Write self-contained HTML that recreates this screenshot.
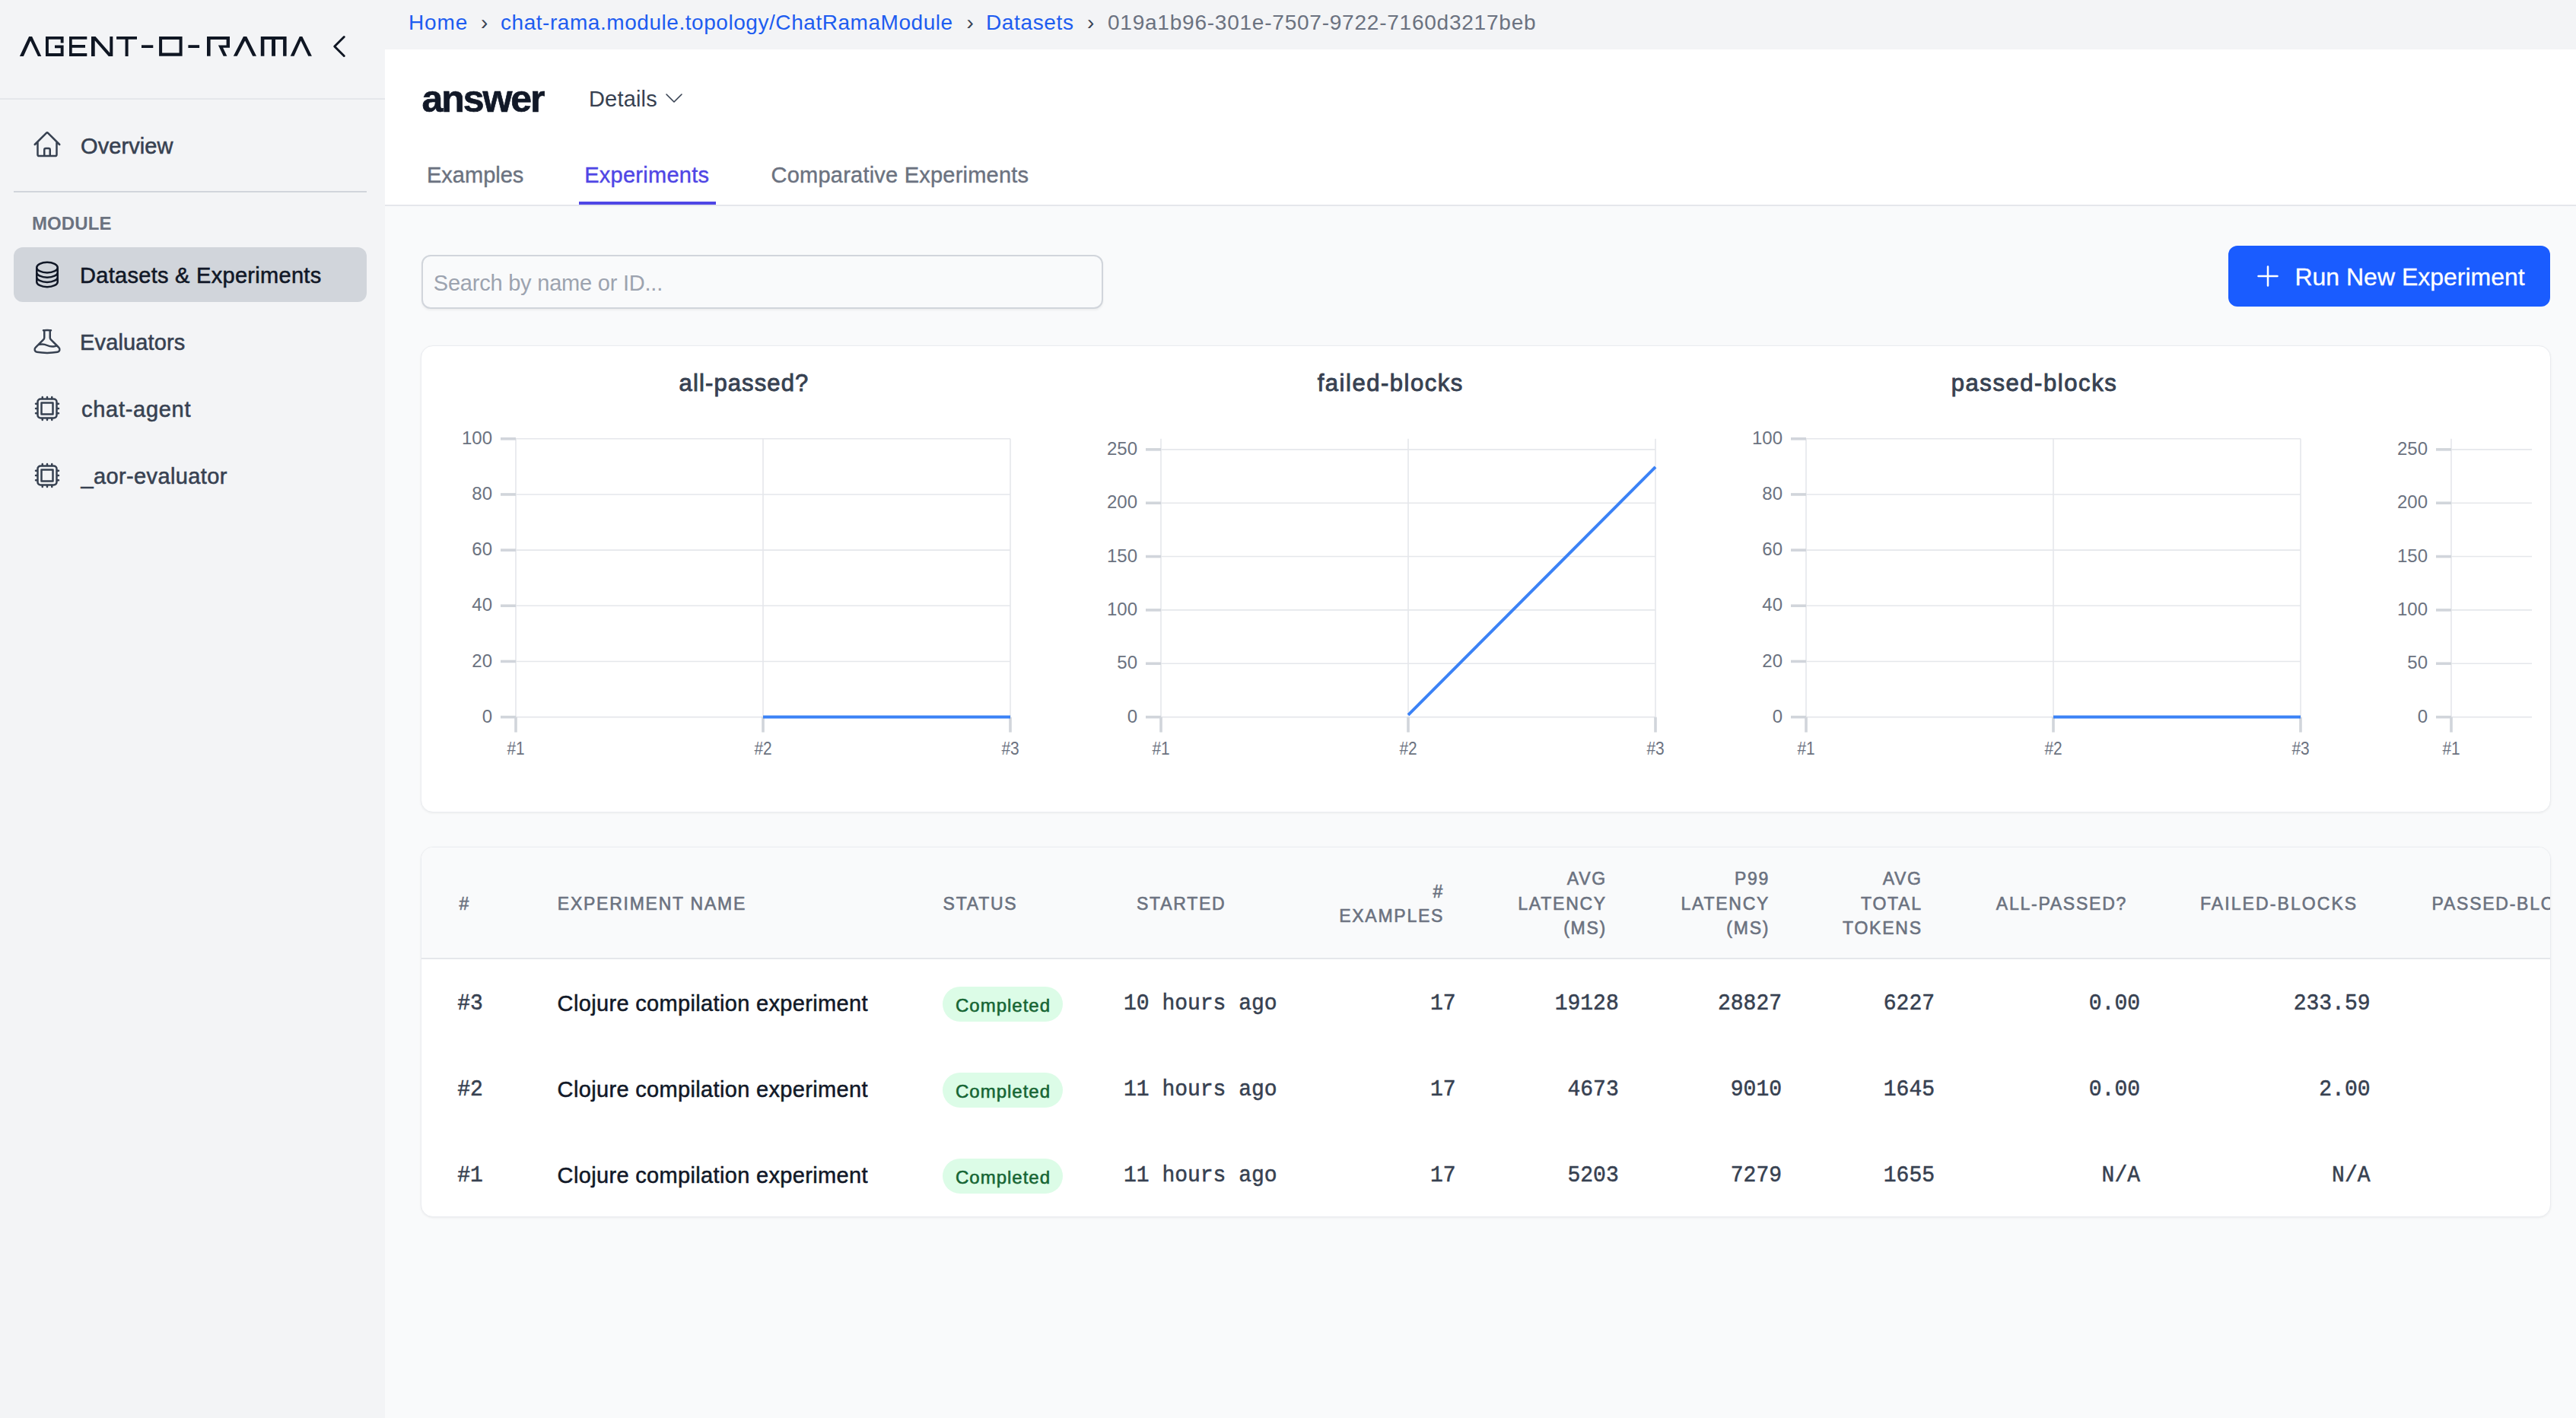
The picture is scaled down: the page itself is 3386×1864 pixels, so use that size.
<!DOCTYPE html>
<html><head><meta charset="utf-8"><title>Agent-O-Rama</title>
<style>
html,body{margin:0;padding:0;}
body{width:3386px;height:1864px;overflow:hidden;position:relative;background:#f9fafb;font-family:'Liberation Sans', sans-serif;}
svg{position:absolute;overflow:visible;}
@media (max-width:1800px){html{zoom:0.5;}}
</style></head><body>
<div style="position:absolute;left:0px;top:0px;width:506px;height:1864px;background:#f3f4f6;"></div>
<div style="position:absolute;left:506px;top:0px;width:2880px;height:65px;background:#f3f4f6;"></div>
<div style="position:absolute;left:506px;top:65px;width:2880px;height:204px;background:#ffffff;"></div>
<div style="position:absolute;left:506px;top:269px;width:2880px;height:2px;background:#e5e7eb;"></div>
<div style="position:absolute;left:0px;top:129px;width:506px;height:2px;background:#e5e7eb;"></div>
<svg style="left:0;top:0" width="506" height="130" viewBox="0 0 506 130">
<g fill="#0f1623">
<polygon points="25.9,74 38.1,48 42.1,48 54.3,74 49.9,74 40.1,53.5 30.9,74"/>
<path d="M60 48H83.6V56.6H79.7V51.8H63.9V70.1H79.7V63.2H72V59.6H83.6V74H60Z"/>
<path d="M91 48H114.3V51.8H94.7V59.1H112V62.8H94.7V70.1H114.3V74H91Z"/>
<path d="M120 48H125.5L144.3 69.5V48H148.3V74H142.8L124.7 53.2V74H120Z"/>
<path d="M153.1 48H180V51.8H168.6V74H164.6V51.8H153.1Z"/>
<rect x="186" y="59.3" width="15.3" height="3.7"/>
<path fill-rule="evenodd" d="M209.1 48H239.6V73.8H209.1ZM213.1 52V69.5H235.6V52Z"/>
<rect x="247.4" y="59.2" width="14.7" height="3.8"/>
<path d="M272 48H302V62.65H293.1L298.4 73.8H293.7L286.9 59.4H297.6V51.9H276.6V73.8H272Z"/>
<polygon points="306.8,73.8 320,48 324.2,48 337.05,73.8 332.2,73.8 322.1,53.5 311.6,73.8"/>
<path d="M342.8 48H376.6V73.8H372.1V52.1H362V73.8H357.1V52.1H347.4V73.8H342.8Z"/>
<polygon points="381.7,73.8 393.8,48 397.3,48 409.9,73.8 405.3,73.8 395.5,53.5 386.5,73.8"/>
</g>
<g transform="translate(426,41) scale(1.6667)" fill="none" stroke="#0f1623" stroke-width="1.8" stroke-linecap="round" stroke-linejoin="round"><path d="M15.75 19.5 8.25 12l7.5-7.5"/></g>
</svg>
<svg style="left:42px;top:170px" width="40" height="40" viewBox="0 0 24 24" fill="none" stroke="#374151" stroke-width="1.5" stroke-linecap="round" stroke-linejoin="round"><path d="m2.25 12 8.954-8.955c.44-.439 1.152-.439 1.591 0L21.75 12M4.5 9.75v10.125c0 .621.504 1.125 1.125 1.125H9.75v-4.875c0-.621.504-1.125 1.125-1.125h2.25c.621 0 1.125.504 1.125 1.125V21h4.125c.621 0 1.125-.504 1.125-1.125V9.75M8.25 21h8.25"/></svg>
<div style="position:absolute;top:177.75px;font-family:'Liberation Sans', sans-serif;font-size:29px;line-height:29px;color:#374151;white-space:nowrap;font-weight:400;letter-spacing:0.09px;left:106.00px;-webkit-text-stroke:0.55px #374151;">Overview</div>
<div style="position:absolute;left:18px;top:251px;width:464px;height:2px;background:#d1d5db;"></div>
<div style="position:absolute;top:281.60px;font-family:'Liberation Sans', sans-serif;font-size:24px;line-height:24px;color:#6b7280;white-space:nowrap;font-weight:700;letter-spacing:0.12px;left:41.90px;">MODULE</div>
<div style="position:absolute;left:18px;top:325px;width:464px;height:72px;background:#d1d5db;border-radius:12px;"></div>
<svg style="left:42px;top:341px" width="40" height="40" viewBox="0 0 24 24" fill="none" stroke="#111827" stroke-width="1.5" stroke-linecap="round" stroke-linejoin="round"><path d="M20.25 6.375c0 2.278-3.694 4.125-8.25 4.125S3.75 8.653 3.75 6.375m16.5 0c0-2.278-3.694-4.125-8.25-4.125S3.75 4.097 3.75 6.375m16.5 0v11.25c0 2.278-3.694 4.125-8.25 4.125s-8.25-1.847-8.25-4.125V6.375m16.5 0v3.75m-16.5-3.75v3.75m16.5 0v3.75C20.25 16.153 16.556 18 12 18s-8.25-1.847-8.25-4.125v-3.75m16.5 0c0 2.278-3.694 4.125-8.25 4.125s-8.25-1.847-8.25-4.125"/></svg>
<div style="position:absolute;top:347.85px;font-family:'Liberation Sans', sans-serif;font-size:29px;line-height:29px;color:#111827;white-space:nowrap;font-weight:400;letter-spacing:0.29px;left:105.00px;-webkit-text-stroke:0.55px #111827;">Datasets &amp; Experiments</div>
<svg style="left:42px;top:429px" width="40" height="40" viewBox="0 0 24 24" fill="none" stroke="#374151" stroke-width="1.5" stroke-linecap="round" stroke-linejoin="round"><path d="M9.75 3.104v5.714a2.25 2.25 0 0 1-.659 1.591L5 14.5M9.75 3.104c-.251.023-.501.05-.75.082m.75-.082a24.301 24.301 0 0 1 4.5 0m0 0v5.714c0 .597.237 1.17.659 1.591L19.8 15.3M14.25 3.104c.251.023.501.05.75.082M19.8 15.3l-1.57.393A9.065 9.065 0 0 1 12 15a9.065 9.065 0 0 0-6.23-.693L5 14.5m14.8.8 1.402 1.402c1.232 1.232.65 3.318-1.067 3.611A48.309 48.309 0 0 1 12 21c-2.773 0-5.491-.235-8.135-.687-1.718-.293-2.3-2.379-1.067-3.61L5 14.5"/></svg>
<div style="position:absolute;top:435.95px;font-family:'Liberation Sans', sans-serif;font-size:29px;line-height:29px;color:#374151;white-space:nowrap;font-weight:400;letter-spacing:0.15px;left:105.00px;-webkit-text-stroke:0.55px #374151;">Evaluators</div>
<svg style="left:42px;top:517px" width="40" height="40" viewBox="0 0 24 24" fill="none" stroke="#374151" stroke-width="1.5" stroke-linecap="round" stroke-linejoin="round"><path d="M8.25 3v1.5M4.5 8.25H3m18 0h-1.5M4.5 12H3m18 0h-1.5m-15 3.75H3m18 0h-1.5M8.25 19.5V21M12 3v1.5m0 15V21m3.75-18v1.5m0 15V21m-9-1.5h10.5a2.25 2.25 0 0 0 2.25-2.25V6.75a2.25 2.25 0 0 0-2.25-2.25H6.75A2.25 2.25 0 0 0 4.5 6.75v10.5a2.25 2.25 0 0 0 2.25 2.25Zm.75-12h9v9h-9v-9Z"/></svg>
<div style="position:absolute;top:523.75px;font-family:'Liberation Sans', sans-serif;font-size:29px;line-height:29px;color:#374151;white-space:nowrap;font-weight:400;letter-spacing:0.72px;left:107.00px;-webkit-text-stroke:0.55px #374151;">chat-agent</div>
<svg style="left:42px;top:605px" width="40" height="40" viewBox="0 0 24 24" fill="none" stroke="#374151" stroke-width="1.5" stroke-linecap="round" stroke-linejoin="round"><path d="M8.25 3v1.5M4.5 8.25H3m18 0h-1.5M4.5 12H3m18 0h-1.5m-15 3.75H3m18 0h-1.5M8.25 19.5V21M12 3v1.5m0 15V21m3.75-18v1.5m0 15V21m-9-1.5h10.5a2.25 2.25 0 0 0 2.25-2.25V6.75a2.25 2.25 0 0 0-2.25-2.25H6.75A2.25 2.25 0 0 0 4.5 6.75v10.5a2.25 2.25 0 0 0 2.25 2.25Zm.75-12h9v9h-9v-9Z"/></svg>
<div style="position:absolute;top:611.75px;font-family:'Liberation Sans', sans-serif;font-size:29px;line-height:29px;color:#374151;white-space:nowrap;font-weight:400;letter-spacing:0.38px;left:106.50px;-webkit-text-stroke:0.55px #374151;">_aor-evaluator</div>
<div style="position:absolute;top:16.00px;font-family:'Liberation Sans', sans-serif;font-size:28px;line-height:28px;color:#1d5cf0;white-space:nowrap;font-weight:400;letter-spacing:0.87px;left:537.00px;">Home</div>
<div style="position:absolute;top:16.00px;font-family:'Liberation Sans', sans-serif;font-size:28px;line-height:28px;color:#374151;white-space:nowrap;font-weight:400;left:632.00px;">&#8250;</div>
<div style="position:absolute;top:16.00px;font-family:'Liberation Sans', sans-serif;font-size:28px;line-height:28px;color:#1d5cf0;white-space:nowrap;font-weight:400;letter-spacing:0.55px;left:658.00px;">chat-rama.module.topology/ChatRamaModule</div>
<div style="position:absolute;top:16.00px;font-family:'Liberation Sans', sans-serif;font-size:28px;line-height:28px;color:#374151;white-space:nowrap;font-weight:400;left:1270.60px;">&#8250;</div>
<div style="position:absolute;top:16.00px;font-family:'Liberation Sans', sans-serif;font-size:28px;line-height:28px;color:#1d5cf0;white-space:nowrap;font-weight:400;letter-spacing:0.64px;left:1296.00px;">Datasets</div>
<div style="position:absolute;top:16.00px;font-family:'Liberation Sans', sans-serif;font-size:28px;line-height:28px;color:#374151;white-space:nowrap;font-weight:400;left:1429.00px;">&#8250;</div>
<div style="position:absolute;top:16.00px;font-family:'Liberation Sans', sans-serif;font-size:28px;line-height:28px;color:#6b7280;white-space:nowrap;font-weight:400;letter-spacing:0.77px;left:1456.00px;">019a1b96-301e-7507-9722-7160d3217beb</div>
<div style="position:absolute;top:105.40px;font-family:'Liberation Sans', sans-serif;font-size:50px;line-height:50px;color:#111827;white-space:nowrap;font-weight:700;letter-spacing:-2.1px;left:554.60px;-webkit-text-stroke:0.7px #111827;">answer</div>
<div style="position:absolute;top:115.75px;font-family:'Liberation Sans', sans-serif;font-size:29px;line-height:29px;color:#374151;white-space:nowrap;font-weight:400;letter-spacing:0.17px;left:774.00px;">Details</div>
<svg style="left:869.8px;top:113px" width="32" height="32" viewBox="0 0 24 24" fill="none" stroke="#374151" stroke-width="1.2" stroke-linecap="round" stroke-linejoin="round"><path d="m19.5 8.25-7.5 7.5-7.5-7.5"/></svg>
<div style="position:absolute;top:215.85px;font-family:'Liberation Sans', sans-serif;font-size:29px;line-height:29px;color:#6b7280;white-space:nowrap;font-weight:400;left:561.00px;-webkit-text-stroke:0.4px #6b7280;">Examples</div>
<div style="position:absolute;top:215.85px;font-family:'Liberation Sans', sans-serif;font-size:29px;line-height:29px;color:#4f46e5;white-space:nowrap;font-weight:400;letter-spacing:0.27px;left:768.20px;-webkit-text-stroke:0.4px #4f46e5;">Experiments</div>
<div style="position:absolute;top:215.85px;font-family:'Liberation Sans', sans-serif;font-size:29px;line-height:29px;color:#6b7280;white-space:nowrap;font-weight:400;letter-spacing:0.22px;left:1013.60px;-webkit-text-stroke:0.4px #6b7280;">Comparative Experiments</div>
<div style="position:absolute;left:761px;top:265px;width:180px;height:4px;background:#4f46e5;"></div>
<div style="position:absolute;left:554px;top:335px;width:892px;height:67px;border:2px solid #d1d5db;border-radius:12px;background:#f9fafb;box-shadow:0 2px 3px rgba(0,0,0,0.05);"></div>
<div style="position:absolute;top:357.85px;font-family:'Liberation Sans', sans-serif;font-size:29px;line-height:29px;color:#9ca3af;white-space:nowrap;font-weight:400;letter-spacing:-0.22px;left:569.80px;">Search by name or ID...</div>
<div style="position:absolute;left:2929px;top:323px;width:423px;height:80px;border-radius:12px;background:#1a5cff;"></div>
<svg style="left:2961px;top:343px" width="40" height="40" viewBox="0 0 24 24" fill="none" stroke="#ffffff" stroke-width="1.5" stroke-linecap="round" stroke-linejoin="round"><path d="M12 4.5v15m7.5-7.5h-15"/></svg>
<div style="position:absolute;top:348.10px;font-family:'Liberation Sans', sans-serif;font-size:32px;line-height:32px;color:#ffffff;white-space:nowrap;font-weight:400;left:3016.40px;-webkit-text-stroke:0.3px #ffffff;">Run New Experiment</div>
<div style="position:absolute;left:553px;top:453.5px;width:2798px;height:612px;border:1px solid #eaecf0;border-radius:16px;background:#ffffff;box-shadow:0 1px 3px rgba(0,0,0,0.06);"></div>
<div style="position:absolute;top:488.45px;font-family:'Liberation Sans', sans-serif;font-size:31px;line-height:31px;color:#374151;white-space:nowrap;font-weight:400;letter-spacing:1.11px;left:978.00px;transform:translateX(-50%);transform-origin:50% 26.35px;-webkit-text-stroke:0.9px #374151;">all-passed?</div>
<svg style="left:0;top:0" width="3386" height="1864"><line x1="678" y1="942.60" x2="1328" y2="942.60" stroke="#e5e7eb" stroke-width="1.6"/><line x1="678" y1="869.44" x2="1328" y2="869.44" stroke="#e5e7eb" stroke-width="1.6"/><line x1="678" y1="796.28" x2="1328" y2="796.28" stroke="#e5e7eb" stroke-width="1.6"/><line x1="678" y1="723.12" x2="1328" y2="723.12" stroke="#e5e7eb" stroke-width="1.6"/><line x1="678" y1="649.96" x2="1328" y2="649.96" stroke="#e5e7eb" stroke-width="1.6"/><line x1="678" y1="576.80" x2="1328" y2="576.80" stroke="#e5e7eb" stroke-width="1.6"/><line x1="678.00" y1="576.8" x2="678.00" y2="942.6" stroke="#e5e7eb" stroke-width="1.6"/><line x1="1003.00" y1="576.8" x2="1003.00" y2="942.6" stroke="#e5e7eb" stroke-width="1.6"/><line x1="1328.00" y1="576.8" x2="1328.00" y2="942.6" stroke="#e5e7eb" stroke-width="1.6"/><line x1="658" y1="942.60" x2="678" y2="942.60" stroke="#d1d5db" stroke-width="3.6"/><line x1="658" y1="869.44" x2="678" y2="869.44" stroke="#d1d5db" stroke-width="3.6"/><line x1="658" y1="796.28" x2="678" y2="796.28" stroke="#d1d5db" stroke-width="3.6"/><line x1="658" y1="723.12" x2="678" y2="723.12" stroke="#d1d5db" stroke-width="3.6"/><line x1="658" y1="649.96" x2="678" y2="649.96" stroke="#d1d5db" stroke-width="3.6"/><line x1="658" y1="576.80" x2="678" y2="576.80" stroke="#d1d5db" stroke-width="3.6"/><line x1="678.00" y1="942.6" x2="678.00" y2="962.6" stroke="#d1d5db" stroke-width="3.6"/><line x1="1003.00" y1="942.6" x2="1003.00" y2="962.6" stroke="#d1d5db" stroke-width="3.6"/><line x1="1328.00" y1="942.6" x2="1328.00" y2="962.6" stroke="#d1d5db" stroke-width="3.6"/><polyline points="1003.00,942.60 1328.00,942.60" fill="none" stroke="#3b82f6" stroke-width="4" stroke-linecap="butt" stroke-linejoin="round"/></svg>
<div style="position:absolute;top:929.70px;font-family:'Liberation Sans', sans-serif;font-size:24px;line-height:24px;color:#6b7280;white-space:nowrap;font-weight:400;right:2739.00px;">0</div>
<div style="position:absolute;top:856.54px;font-family:'Liberation Sans', sans-serif;font-size:24px;line-height:24px;color:#6b7280;white-space:nowrap;font-weight:400;right:2739.00px;">20</div>
<div style="position:absolute;top:783.38px;font-family:'Liberation Sans', sans-serif;font-size:24px;line-height:24px;color:#6b7280;white-space:nowrap;font-weight:400;right:2739.00px;">40</div>
<div style="position:absolute;top:710.22px;font-family:'Liberation Sans', sans-serif;font-size:24px;line-height:24px;color:#6b7280;white-space:nowrap;font-weight:400;right:2739.00px;">60</div>
<div style="position:absolute;top:637.06px;font-family:'Liberation Sans', sans-serif;font-size:24px;line-height:24px;color:#6b7280;white-space:nowrap;font-weight:400;right:2739.00px;">80</div>
<div style="position:absolute;top:563.90px;font-family:'Liberation Sans', sans-serif;font-size:24px;line-height:24px;color:#6b7280;white-space:nowrap;font-weight:400;right:2739.00px;">100</div>
<div style="position:absolute;top:971.60px;font-family:'Liberation Sans', sans-serif;font-size:24px;line-height:24px;color:#6b7280;white-space:nowrap;font-weight:400;left:678.00px;transform:translateX(-50%) scale(0.87,1.0);transform-origin:50% 20.40px;">#1</div>
<div style="position:absolute;top:971.60px;font-family:'Liberation Sans', sans-serif;font-size:24px;line-height:24px;color:#6b7280;white-space:nowrap;font-weight:400;left:1003.00px;transform:translateX(-50%) scale(0.87,1.0);transform-origin:50% 20.40px;">#2</div>
<div style="position:absolute;top:971.60px;font-family:'Liberation Sans', sans-serif;font-size:24px;line-height:24px;color:#6b7280;white-space:nowrap;font-weight:400;left:1328.00px;transform:translateX(-50%) scale(0.87,1.0);transform-origin:50% 20.40px;">#3</div>
<div style="position:absolute;top:488.45px;font-family:'Liberation Sans', sans-serif;font-size:31px;line-height:31px;color:#374151;white-space:nowrap;font-weight:400;letter-spacing:1.53px;left:1827.80px;transform:translateX(-50%);transform-origin:50% 26.35px;-webkit-text-stroke:0.9px #374151;">failed-blocks</div>
<svg style="left:0;top:0" width="3386" height="1864"><line x1="1526" y1="942.60" x2="2176" y2="942.60" stroke="#e5e7eb" stroke-width="1.6"/><line x1="1526" y1="872.25" x2="2176" y2="872.25" stroke="#e5e7eb" stroke-width="1.6"/><line x1="1526" y1="801.91" x2="2176" y2="801.91" stroke="#e5e7eb" stroke-width="1.6"/><line x1="1526" y1="731.56" x2="2176" y2="731.56" stroke="#e5e7eb" stroke-width="1.6"/><line x1="1526" y1="661.22" x2="2176" y2="661.22" stroke="#e5e7eb" stroke-width="1.6"/><line x1="1526" y1="590.87" x2="2176" y2="590.87" stroke="#e5e7eb" stroke-width="1.6"/><line x1="1526.00" y1="576.8" x2="1526.00" y2="942.6" stroke="#e5e7eb" stroke-width="1.6"/><line x1="1851.00" y1="576.8" x2="1851.00" y2="942.6" stroke="#e5e7eb" stroke-width="1.6"/><line x1="2176.00" y1="576.8" x2="2176.00" y2="942.6" stroke="#e5e7eb" stroke-width="1.6"/><line x1="1506" y1="942.60" x2="1526" y2="942.60" stroke="#d1d5db" stroke-width="3.6"/><line x1="1506" y1="872.25" x2="1526" y2="872.25" stroke="#d1d5db" stroke-width="3.6"/><line x1="1506" y1="801.91" x2="1526" y2="801.91" stroke="#d1d5db" stroke-width="3.6"/><line x1="1506" y1="731.56" x2="1526" y2="731.56" stroke="#d1d5db" stroke-width="3.6"/><line x1="1506" y1="661.22" x2="1526" y2="661.22" stroke="#d1d5db" stroke-width="3.6"/><line x1="1506" y1="590.87" x2="1526" y2="590.87" stroke="#d1d5db" stroke-width="3.6"/><line x1="1526.00" y1="942.6" x2="1526.00" y2="962.6" stroke="#d1d5db" stroke-width="3.6"/><line x1="1851.00" y1="942.6" x2="1851.00" y2="962.6" stroke="#d1d5db" stroke-width="3.6"/><line x1="2176.00" y1="942.6" x2="2176.00" y2="962.6" stroke="#d1d5db" stroke-width="3.6"/><polyline points="1851.00,939.79 2176.00,613.96" fill="none" stroke="#3b82f6" stroke-width="4" stroke-linecap="butt" stroke-linejoin="round"/></svg>
<div style="position:absolute;top:929.70px;font-family:'Liberation Sans', sans-serif;font-size:24px;line-height:24px;color:#6b7280;white-space:nowrap;font-weight:400;right:1891.00px;">0</div>
<div style="position:absolute;top:859.35px;font-family:'Liberation Sans', sans-serif;font-size:24px;line-height:24px;color:#6b7280;white-space:nowrap;font-weight:400;right:1891.00px;">50</div>
<div style="position:absolute;top:789.01px;font-family:'Liberation Sans', sans-serif;font-size:24px;line-height:24px;color:#6b7280;white-space:nowrap;font-weight:400;right:1891.00px;">100</div>
<div style="position:absolute;top:718.66px;font-family:'Liberation Sans', sans-serif;font-size:24px;line-height:24px;color:#6b7280;white-space:nowrap;font-weight:400;right:1891.00px;">150</div>
<div style="position:absolute;top:648.32px;font-family:'Liberation Sans', sans-serif;font-size:24px;line-height:24px;color:#6b7280;white-space:nowrap;font-weight:400;right:1891.00px;">200</div>
<div style="position:absolute;top:577.97px;font-family:'Liberation Sans', sans-serif;font-size:24px;line-height:24px;color:#6b7280;white-space:nowrap;font-weight:400;right:1891.00px;">250</div>
<div style="position:absolute;top:971.60px;font-family:'Liberation Sans', sans-serif;font-size:24px;line-height:24px;color:#6b7280;white-space:nowrap;font-weight:400;left:1526.00px;transform:translateX(-50%) scale(0.87,1.0);transform-origin:50% 20.40px;">#1</div>
<div style="position:absolute;top:971.60px;font-family:'Liberation Sans', sans-serif;font-size:24px;line-height:24px;color:#6b7280;white-space:nowrap;font-weight:400;left:1851.00px;transform:translateX(-50%) scale(0.87,1.0);transform-origin:50% 20.40px;">#2</div>
<div style="position:absolute;top:971.60px;font-family:'Liberation Sans', sans-serif;font-size:24px;line-height:24px;color:#6b7280;white-space:nowrap;font-weight:400;left:2176.00px;transform:translateX(-50%) scale(0.87,1.0);transform-origin:50% 20.40px;">#3</div>
<div style="position:absolute;top:488.45px;font-family:'Liberation Sans', sans-serif;font-size:31px;line-height:31px;color:#374151;white-space:nowrap;font-weight:400;letter-spacing:1.57px;left:2674.00px;transform:translateX(-50%);transform-origin:50% 26.35px;-webkit-text-stroke:0.9px #374151;">passed-blocks</div>
<svg style="left:0;top:0" width="3386" height="1864"><line x1="2374" y1="942.60" x2="3024" y2="942.60" stroke="#e5e7eb" stroke-width="1.6"/><line x1="2374" y1="869.44" x2="3024" y2="869.44" stroke="#e5e7eb" stroke-width="1.6"/><line x1="2374" y1="796.28" x2="3024" y2="796.28" stroke="#e5e7eb" stroke-width="1.6"/><line x1="2374" y1="723.12" x2="3024" y2="723.12" stroke="#e5e7eb" stroke-width="1.6"/><line x1="2374" y1="649.96" x2="3024" y2="649.96" stroke="#e5e7eb" stroke-width="1.6"/><line x1="2374" y1="576.80" x2="3024" y2="576.80" stroke="#e5e7eb" stroke-width="1.6"/><line x1="2374.00" y1="576.8" x2="2374.00" y2="942.6" stroke="#e5e7eb" stroke-width="1.6"/><line x1="2699.00" y1="576.8" x2="2699.00" y2="942.6" stroke="#e5e7eb" stroke-width="1.6"/><line x1="3024.00" y1="576.8" x2="3024.00" y2="942.6" stroke="#e5e7eb" stroke-width="1.6"/><line x1="2354" y1="942.60" x2="2374" y2="942.60" stroke="#d1d5db" stroke-width="3.6"/><line x1="2354" y1="869.44" x2="2374" y2="869.44" stroke="#d1d5db" stroke-width="3.6"/><line x1="2354" y1="796.28" x2="2374" y2="796.28" stroke="#d1d5db" stroke-width="3.6"/><line x1="2354" y1="723.12" x2="2374" y2="723.12" stroke="#d1d5db" stroke-width="3.6"/><line x1="2354" y1="649.96" x2="2374" y2="649.96" stroke="#d1d5db" stroke-width="3.6"/><line x1="2354" y1="576.80" x2="2374" y2="576.80" stroke="#d1d5db" stroke-width="3.6"/><line x1="2374.00" y1="942.6" x2="2374.00" y2="962.6" stroke="#d1d5db" stroke-width="3.6"/><line x1="2699.00" y1="942.6" x2="2699.00" y2="962.6" stroke="#d1d5db" stroke-width="3.6"/><line x1="3024.00" y1="942.6" x2="3024.00" y2="962.6" stroke="#d1d5db" stroke-width="3.6"/><polyline points="2699.00,942.60 3024.00,942.60" fill="none" stroke="#3b82f6" stroke-width="4" stroke-linecap="butt" stroke-linejoin="round"/></svg>
<div style="position:absolute;top:929.70px;font-family:'Liberation Sans', sans-serif;font-size:24px;line-height:24px;color:#6b7280;white-space:nowrap;font-weight:400;right:1043.00px;">0</div>
<div style="position:absolute;top:856.54px;font-family:'Liberation Sans', sans-serif;font-size:24px;line-height:24px;color:#6b7280;white-space:nowrap;font-weight:400;right:1043.00px;">20</div>
<div style="position:absolute;top:783.38px;font-family:'Liberation Sans', sans-serif;font-size:24px;line-height:24px;color:#6b7280;white-space:nowrap;font-weight:400;right:1043.00px;">40</div>
<div style="position:absolute;top:710.22px;font-family:'Liberation Sans', sans-serif;font-size:24px;line-height:24px;color:#6b7280;white-space:nowrap;font-weight:400;right:1043.00px;">60</div>
<div style="position:absolute;top:637.06px;font-family:'Liberation Sans', sans-serif;font-size:24px;line-height:24px;color:#6b7280;white-space:nowrap;font-weight:400;right:1043.00px;">80</div>
<div style="position:absolute;top:563.90px;font-family:'Liberation Sans', sans-serif;font-size:24px;line-height:24px;color:#6b7280;white-space:nowrap;font-weight:400;right:1043.00px;">100</div>
<div style="position:absolute;top:971.60px;font-family:'Liberation Sans', sans-serif;font-size:24px;line-height:24px;color:#6b7280;white-space:nowrap;font-weight:400;left:2374.00px;transform:translateX(-50%) scale(0.87,1.0);transform-origin:50% 20.40px;">#1</div>
<div style="position:absolute;top:971.60px;font-family:'Liberation Sans', sans-serif;font-size:24px;line-height:24px;color:#6b7280;white-space:nowrap;font-weight:400;left:2699.00px;transform:translateX(-50%) scale(0.87,1.0);transform-origin:50% 20.40px;">#2</div>
<div style="position:absolute;top:971.60px;font-family:'Liberation Sans', sans-serif;font-size:24px;line-height:24px;color:#6b7280;white-space:nowrap;font-weight:400;left:3024.00px;transform:translateX(-50%) scale(0.87,1.0);transform-origin:50% 20.40px;">#3</div>
<svg style="left:0;top:0" width="3386" height="1864"><line x1="3222" y1="942.60" x2="3328" y2="942.60" stroke="#e5e7eb" stroke-width="1.6"/><line x1="3222" y1="872.25" x2="3328" y2="872.25" stroke="#e5e7eb" stroke-width="1.6"/><line x1="3222" y1="801.91" x2="3328" y2="801.91" stroke="#e5e7eb" stroke-width="1.6"/><line x1="3222" y1="731.56" x2="3328" y2="731.56" stroke="#e5e7eb" stroke-width="1.6"/><line x1="3222" y1="661.22" x2="3328" y2="661.22" stroke="#e5e7eb" stroke-width="1.6"/><line x1="3222" y1="590.87" x2="3328" y2="590.87" stroke="#e5e7eb" stroke-width="1.6"/><line x1="3222.00" y1="576.8" x2="3222.00" y2="942.6" stroke="#e5e7eb" stroke-width="1.6"/><line x1="3202" y1="942.60" x2="3222" y2="942.60" stroke="#d1d5db" stroke-width="3.6"/><line x1="3202" y1="872.25" x2="3222" y2="872.25" stroke="#d1d5db" stroke-width="3.6"/><line x1="3202" y1="801.91" x2="3222" y2="801.91" stroke="#d1d5db" stroke-width="3.6"/><line x1="3202" y1="731.56" x2="3222" y2="731.56" stroke="#d1d5db" stroke-width="3.6"/><line x1="3202" y1="661.22" x2="3222" y2="661.22" stroke="#d1d5db" stroke-width="3.6"/><line x1="3202" y1="590.87" x2="3222" y2="590.87" stroke="#d1d5db" stroke-width="3.6"/><line x1="3222.00" y1="942.6" x2="3222.00" y2="962.6" stroke="#d1d5db" stroke-width="3.6"/></svg>
<div style="position:absolute;top:929.70px;font-family:'Liberation Sans', sans-serif;font-size:24px;line-height:24px;color:#6b7280;white-space:nowrap;font-weight:400;right:195.00px;">0</div>
<div style="position:absolute;top:859.35px;font-family:'Liberation Sans', sans-serif;font-size:24px;line-height:24px;color:#6b7280;white-space:nowrap;font-weight:400;right:195.00px;">50</div>
<div style="position:absolute;top:789.01px;font-family:'Liberation Sans', sans-serif;font-size:24px;line-height:24px;color:#6b7280;white-space:nowrap;font-weight:400;right:195.00px;">100</div>
<div style="position:absolute;top:718.66px;font-family:'Liberation Sans', sans-serif;font-size:24px;line-height:24px;color:#6b7280;white-space:nowrap;font-weight:400;right:195.00px;">150</div>
<div style="position:absolute;top:648.32px;font-family:'Liberation Sans', sans-serif;font-size:24px;line-height:24px;color:#6b7280;white-space:nowrap;font-weight:400;right:195.00px;">200</div>
<div style="position:absolute;top:577.97px;font-family:'Liberation Sans', sans-serif;font-size:24px;line-height:24px;color:#6b7280;white-space:nowrap;font-weight:400;right:195.00px;">250</div>
<div style="position:absolute;top:971.60px;font-family:'Liberation Sans', sans-serif;font-size:24px;line-height:24px;color:#6b7280;white-space:nowrap;font-weight:400;left:3222.00px;transform:translateX(-50%) scale(0.87,1.0);transform-origin:50% 20.40px;">#1</div>
<div style="position:absolute;left:553px;top:1113px;width:2798px;height:485px;border:1px solid #eaecf0;border-radius:16px;background:#ffffff;box-shadow:0 1px 3px rgba(0,0,0,0.06);overflow:hidden;"><div style="position:absolute;left:0;top:0;right:0;height:145px;background:#f9fafb;border-bottom:2px solid #e5e7eb;"></div></div>
<div style="position:absolute;top:1176.95px;font-family:'Liberation Sans', sans-serif;font-size:23px;line-height:23px;color:#6b7280;white-space:nowrap;font-weight:400;letter-spacing:1.75px;left:603.60px;-webkit-text-stroke:0.6px #6b7280;">#</div>
<div style="position:absolute;top:1176.95px;font-family:'Liberation Sans', sans-serif;font-size:23px;line-height:23px;color:#6b7280;white-space:nowrap;font-weight:400;letter-spacing:1.75px;left:732.80px;-webkit-text-stroke:0.6px #6b7280;">EXPERIMENT NAME</div>
<div style="position:absolute;top:1176.95px;font-family:'Liberation Sans', sans-serif;font-size:23px;line-height:23px;color:#6b7280;white-space:nowrap;font-weight:400;letter-spacing:1.75px;left:1239.60px;-webkit-text-stroke:0.6px #6b7280;">STATUS</div>
<div style="position:absolute;top:1176.95px;font-family:'Liberation Sans', sans-serif;font-size:23px;line-height:23px;color:#6b7280;white-space:nowrap;font-weight:400;letter-spacing:1.75px;left:1494.00px;-webkit-text-stroke:0.6px #6b7280;">STARTED</div>
<div style="position:absolute;top:1160.95px;font-family:'Liberation Sans', sans-serif;font-size:23px;line-height:23px;color:#6b7280;white-space:nowrap;font-weight:400;letter-spacing:1.75px;right:1487.85px;-webkit-text-stroke:0.6px #6b7280;">#</div>
<div style="position:absolute;top:1192.85px;font-family:'Liberation Sans', sans-serif;font-size:23px;line-height:23px;color:#6b7280;white-space:nowrap;font-weight:400;letter-spacing:1.75px;right:1487.85px;-webkit-text-stroke:0.6px #6b7280;">EXAMPLES</div>
<div style="position:absolute;top:1144.45px;font-family:'Liberation Sans', sans-serif;font-size:23px;line-height:23px;color:#6b7280;white-space:nowrap;font-weight:400;letter-spacing:1.75px;right:1274.05px;-webkit-text-stroke:0.6px #6b7280;">AVG</div>
<div style="position:absolute;top:1176.65px;font-family:'Liberation Sans', sans-serif;font-size:23px;line-height:23px;color:#6b7280;white-space:nowrap;font-weight:400;letter-spacing:1.75px;right:1274.05px;-webkit-text-stroke:0.6px #6b7280;">LATENCY</div>
<div style="position:absolute;top:1208.85px;font-family:'Liberation Sans', sans-serif;font-size:23px;line-height:23px;color:#6b7280;white-space:nowrap;font-weight:400;letter-spacing:1.75px;right:1274.05px;-webkit-text-stroke:0.6px #6b7280;">(MS)</div>
<div style="position:absolute;top:1144.45px;font-family:'Liberation Sans', sans-serif;font-size:23px;line-height:23px;color:#6b7280;white-space:nowrap;font-weight:400;letter-spacing:1.75px;right:1059.85px;-webkit-text-stroke:0.6px #6b7280;">P99</div>
<div style="position:absolute;top:1176.65px;font-family:'Liberation Sans', sans-serif;font-size:23px;line-height:23px;color:#6b7280;white-space:nowrap;font-weight:400;letter-spacing:1.75px;right:1059.85px;-webkit-text-stroke:0.6px #6b7280;">LATENCY</div>
<div style="position:absolute;top:1208.85px;font-family:'Liberation Sans', sans-serif;font-size:23px;line-height:23px;color:#6b7280;white-space:nowrap;font-weight:400;letter-spacing:1.75px;right:1059.85px;-webkit-text-stroke:0.6px #6b7280;">(MS)</div>
<div style="position:absolute;top:1144.45px;font-family:'Liberation Sans', sans-serif;font-size:23px;line-height:23px;color:#6b7280;white-space:nowrap;font-weight:400;letter-spacing:1.75px;right:859.25px;-webkit-text-stroke:0.6px #6b7280;">AVG</div>
<div style="position:absolute;top:1176.65px;font-family:'Liberation Sans', sans-serif;font-size:23px;line-height:23px;color:#6b7280;white-space:nowrap;font-weight:400;letter-spacing:1.75px;right:859.25px;-webkit-text-stroke:0.6px #6b7280;">TOTAL</div>
<div style="position:absolute;top:1208.85px;font-family:'Liberation Sans', sans-serif;font-size:23px;line-height:23px;color:#6b7280;white-space:nowrap;font-weight:400;letter-spacing:1.75px;right:859.25px;-webkit-text-stroke:0.6px #6b7280;">TOKENS</div>
<div style="position:absolute;top:1176.95px;font-family:'Liberation Sans', sans-serif;font-size:23px;line-height:23px;color:#6b7280;white-space:nowrap;font-weight:400;letter-spacing:1.75px;left:2623.80px;-webkit-text-stroke:0.6px #6b7280;">ALL-PASSED?</div>
<div style="position:absolute;top:1176.95px;font-family:'Liberation Sans', sans-serif;font-size:23px;line-height:23px;color:#6b7280;white-space:nowrap;font-weight:400;letter-spacing:2.08px;left:2892.00px;-webkit-text-stroke:0.6px #6b7280;">FAILED-BLOCKS</div>
<div style="position:absolute;left:3150px;top:1150px;width:202px;height:80px;overflow:hidden;">
<div style="position:absolute;top:26.95px;font-family:'Liberation Sans', sans-serif;font-size:23px;line-height:23px;color:#6b7280;white-space:nowrap;font-weight:400;letter-spacing:1.75px;left:46.60px;-webkit-text-stroke:0.6px #6b7280;">PASSED-BLOCKS</div>
</div>
<div style="position:absolute;top:1305.72px;font-family:'Liberation Mono', monospace;font-size:28px;line-height:28px;color:#374151;white-space:nowrap;font-weight:400;left:601.20px;transform:scale(1.0,1.07);transform-origin:0 21.28px;-webkit-text-stroke:0.5px #374151;">#3</div>
<div style="position:absolute;top:1304.85px;font-family:'Liberation Sans', sans-serif;font-size:29px;line-height:29px;color:#111827;white-space:nowrap;font-weight:400;letter-spacing:0.34px;left:732.60px;-webkit-text-stroke:0.5px #111827;">Clojure compilation experiment</div>
<div style="position:absolute;left:1239px;top:1297px;width:158px;height:46px;border-radius:23px;background:#dcfce7;"></div>
<div style="position:absolute;top:1309.60px;font-family:'Liberation Sans', sans-serif;font-size:24px;line-height:24px;color:#166534;white-space:nowrap;font-weight:400;letter-spacing:1.0px;left:1256.00px;-webkit-text-stroke:0.55px #166534;">Completed</div>
<div style="position:absolute;top:1305.72px;font-family:'Liberation Mono', monospace;font-size:28px;line-height:28px;color:#374151;white-space:nowrap;font-weight:400;left:1477.00px;transform:scale(1.0,1.07);transform-origin:0 21.28px;-webkit-text-stroke:0.5px #374151;">10 hours ago</div>
<div style="position:absolute;top:1305.72px;font-family:'Liberation Mono', monospace;font-size:28px;line-height:28px;color:#374151;white-space:nowrap;font-weight:400;right:1472.50px;transform:scale(1.0,1.07);transform-origin:100% 21.28px;-webkit-text-stroke:0.5px #374151;">17</div>
<div style="position:absolute;top:1305.72px;font-family:'Liberation Mono', monospace;font-size:28px;line-height:28px;color:#374151;white-space:nowrap;font-weight:400;right:1258.30px;transform:scale(1.0,1.07);transform-origin:100% 21.28px;-webkit-text-stroke:0.5px #374151;">19128</div>
<div style="position:absolute;top:1305.72px;font-family:'Liberation Mono', monospace;font-size:28px;line-height:28px;color:#374151;white-space:nowrap;font-weight:400;right:1044.00px;transform:scale(1.0,1.07);transform-origin:100% 21.28px;-webkit-text-stroke:0.5px #374151;">28827</div>
<div style="position:absolute;top:1305.72px;font-family:'Liberation Mono', monospace;font-size:28px;line-height:28px;color:#374151;white-space:nowrap;font-weight:400;right:843.00px;transform:scale(1.0,1.07);transform-origin:100% 21.28px;-webkit-text-stroke:0.5px #374151;">6227</div>
<div style="position:absolute;top:1305.72px;font-family:'Liberation Mono', monospace;font-size:28px;line-height:28px;color:#374151;white-space:nowrap;font-weight:400;right:573.00px;transform:scale(1.0,1.07);transform-origin:100% 21.28px;-webkit-text-stroke:0.5px #374151;">0.00</div>
<div style="position:absolute;top:1305.72px;font-family:'Liberation Mono', monospace;font-size:28px;line-height:28px;color:#374151;white-space:nowrap;font-weight:400;right:270.50px;transform:scale(1.0,1.07);transform-origin:100% 21.28px;-webkit-text-stroke:0.5px #374151;">233.59</div>
<div style="position:absolute;top:1418.72px;font-family:'Liberation Mono', monospace;font-size:28px;line-height:28px;color:#374151;white-space:nowrap;font-weight:400;left:601.20px;transform:scale(1.0,1.07);transform-origin:0 21.28px;-webkit-text-stroke:0.5px #374151;">#2</div>
<div style="position:absolute;top:1417.85px;font-family:'Liberation Sans', sans-serif;font-size:29px;line-height:29px;color:#111827;white-space:nowrap;font-weight:400;letter-spacing:0.34px;left:732.60px;-webkit-text-stroke:0.5px #111827;">Clojure compilation experiment</div>
<div style="position:absolute;left:1239px;top:1410px;width:158px;height:46px;border-radius:23px;background:#dcfce7;"></div>
<div style="position:absolute;top:1422.60px;font-family:'Liberation Sans', sans-serif;font-size:24px;line-height:24px;color:#166534;white-space:nowrap;font-weight:400;letter-spacing:1.0px;left:1256.00px;-webkit-text-stroke:0.55px #166534;">Completed</div>
<div style="position:absolute;top:1418.72px;font-family:'Liberation Mono', monospace;font-size:28px;line-height:28px;color:#374151;white-space:nowrap;font-weight:400;left:1477.00px;transform:scale(1.0,1.07);transform-origin:0 21.28px;-webkit-text-stroke:0.5px #374151;">11 hours ago</div>
<div style="position:absolute;top:1418.72px;font-family:'Liberation Mono', monospace;font-size:28px;line-height:28px;color:#374151;white-space:nowrap;font-weight:400;right:1472.50px;transform:scale(1.0,1.07);transform-origin:100% 21.28px;-webkit-text-stroke:0.5px #374151;">17</div>
<div style="position:absolute;top:1418.72px;font-family:'Liberation Mono', monospace;font-size:28px;line-height:28px;color:#374151;white-space:nowrap;font-weight:400;right:1258.30px;transform:scale(1.0,1.07);transform-origin:100% 21.28px;-webkit-text-stroke:0.5px #374151;">4673</div>
<div style="position:absolute;top:1418.72px;font-family:'Liberation Mono', monospace;font-size:28px;line-height:28px;color:#374151;white-space:nowrap;font-weight:400;right:1044.00px;transform:scale(1.0,1.07);transform-origin:100% 21.28px;-webkit-text-stroke:0.5px #374151;">9010</div>
<div style="position:absolute;top:1418.72px;font-family:'Liberation Mono', monospace;font-size:28px;line-height:28px;color:#374151;white-space:nowrap;font-weight:400;right:843.00px;transform:scale(1.0,1.07);transform-origin:100% 21.28px;-webkit-text-stroke:0.5px #374151;">1645</div>
<div style="position:absolute;top:1418.72px;font-family:'Liberation Mono', monospace;font-size:28px;line-height:28px;color:#374151;white-space:nowrap;font-weight:400;right:573.00px;transform:scale(1.0,1.07);transform-origin:100% 21.28px;-webkit-text-stroke:0.5px #374151;">0.00</div>
<div style="position:absolute;top:1418.72px;font-family:'Liberation Mono', monospace;font-size:28px;line-height:28px;color:#374151;white-space:nowrap;font-weight:400;right:270.50px;transform:scale(1.0,1.07);transform-origin:100% 21.28px;-webkit-text-stroke:0.5px #374151;">2.00</div>
<div style="position:absolute;top:1531.72px;font-family:'Liberation Mono', monospace;font-size:28px;line-height:28px;color:#374151;white-space:nowrap;font-weight:400;left:601.20px;transform:scale(1.0,1.07);transform-origin:0 21.28px;-webkit-text-stroke:0.5px #374151;">#1</div>
<div style="position:absolute;top:1530.85px;font-family:'Liberation Sans', sans-serif;font-size:29px;line-height:29px;color:#111827;white-space:nowrap;font-weight:400;letter-spacing:0.34px;left:732.60px;-webkit-text-stroke:0.5px #111827;">Clojure compilation experiment</div>
<div style="position:absolute;left:1239px;top:1523px;width:158px;height:46px;border-radius:23px;background:#dcfce7;"></div>
<div style="position:absolute;top:1535.60px;font-family:'Liberation Sans', sans-serif;font-size:24px;line-height:24px;color:#166534;white-space:nowrap;font-weight:400;letter-spacing:1.0px;left:1256.00px;-webkit-text-stroke:0.55px #166534;">Completed</div>
<div style="position:absolute;top:1531.72px;font-family:'Liberation Mono', monospace;font-size:28px;line-height:28px;color:#374151;white-space:nowrap;font-weight:400;left:1477.00px;transform:scale(1.0,1.07);transform-origin:0 21.28px;-webkit-text-stroke:0.5px #374151;">11 hours ago</div>
<div style="position:absolute;top:1531.72px;font-family:'Liberation Mono', monospace;font-size:28px;line-height:28px;color:#374151;white-space:nowrap;font-weight:400;right:1472.50px;transform:scale(1.0,1.07);transform-origin:100% 21.28px;-webkit-text-stroke:0.5px #374151;">17</div>
<div style="position:absolute;top:1531.72px;font-family:'Liberation Mono', monospace;font-size:28px;line-height:28px;color:#374151;white-space:nowrap;font-weight:400;right:1258.30px;transform:scale(1.0,1.07);transform-origin:100% 21.28px;-webkit-text-stroke:0.5px #374151;">5203</div>
<div style="position:absolute;top:1531.72px;font-family:'Liberation Mono', monospace;font-size:28px;line-height:28px;color:#374151;white-space:nowrap;font-weight:400;right:1044.00px;transform:scale(1.0,1.07);transform-origin:100% 21.28px;-webkit-text-stroke:0.5px #374151;">7279</div>
<div style="position:absolute;top:1531.72px;font-family:'Liberation Mono', monospace;font-size:28px;line-height:28px;color:#374151;white-space:nowrap;font-weight:400;right:843.00px;transform:scale(1.0,1.07);transform-origin:100% 21.28px;-webkit-text-stroke:0.5px #374151;">1655</div>
<div style="position:absolute;top:1531.72px;font-family:'Liberation Mono', monospace;font-size:28px;line-height:28px;color:#374151;white-space:nowrap;font-weight:400;right:573.00px;transform:scale(1.0,1.07);transform-origin:100% 21.28px;-webkit-text-stroke:0.5px #374151;">N/A</div>
<div style="position:absolute;top:1531.72px;font-family:'Liberation Mono', monospace;font-size:28px;line-height:28px;color:#374151;white-space:nowrap;font-weight:400;right:270.50px;transform:scale(1.0,1.07);transform-origin:100% 21.28px;-webkit-text-stroke:0.5px #374151;">N/A</div>
</body></html>
